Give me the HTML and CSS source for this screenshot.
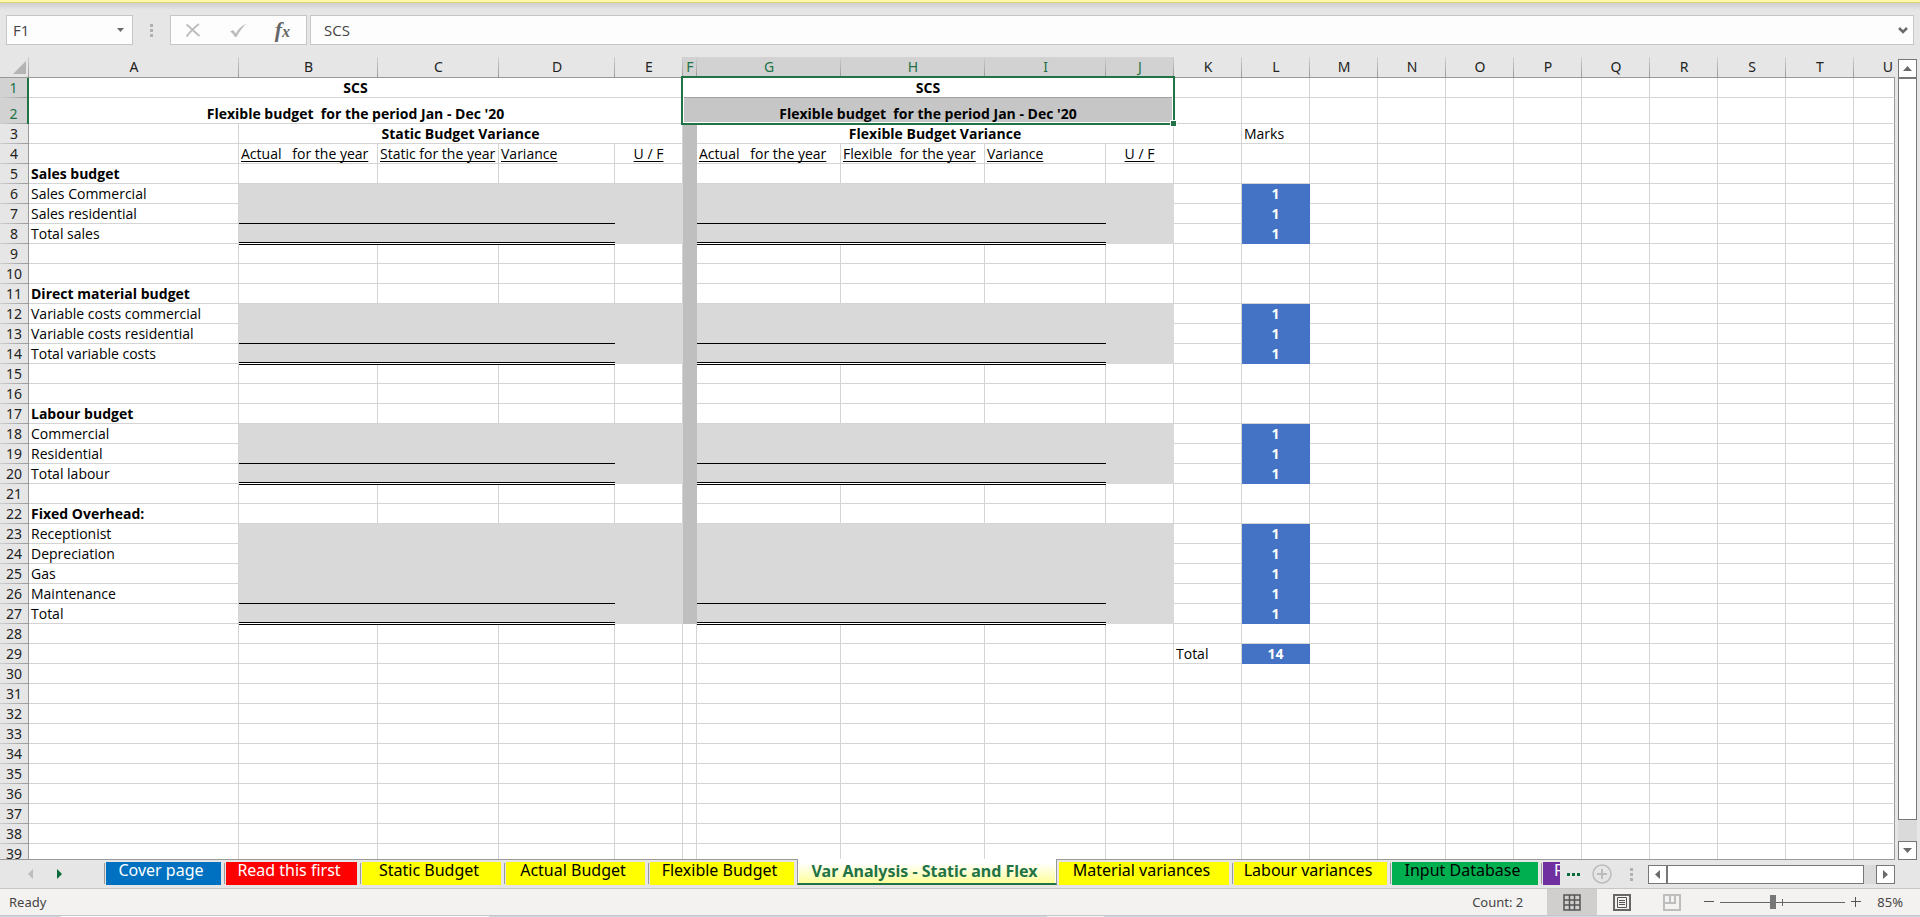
FILE: index.html
```html
<!DOCTYPE html>
<html lang="en">
<head>
<meta charset="utf-8">
<title>Var Analysis - Static and Flex</title>
<link rel="stylesheet" href="styles.css">
</head>
<body>
<div class="app">
  <div class="ribbon-edge"></div>

  <div class="formula-bar">
    <div class="box name-box">
      <input class="name-input" type="text" value="F1" aria-label="Name box">
      <button class="bare name-drop" aria-label="Names"><svg width="7" height="4" viewBox="0 0 7 4"><path d="M0 0h7L3.500 4z" fill="#6a6a6a"/></svg></button>
    </div>
    <svg class="grip" width="3" height="13" viewBox="0 0 3 13"><path d="M0 0h3v3H0zM0 5h3v3H0zM0 10h3v3H0z" fill="#b0b0b0"/></svg>
    <div class="box fx-box">
      <button class="bare" aria-label="Cancel"><svg width="16" height="15" viewBox="0 0 16 15"><path d="M1.500 1.500C6 5 10 9.500 14.500 13M14 1C9 4.500 5 9 1.500 13.500" fill="none" stroke="#bdbdbd" stroke-width="2"/></svg></button>
      <button class="bare" aria-label="Enter"><svg width="18" height="15" viewBox="0 0 18 15"><path d="M1 8.500L4 7l3 3.500C9 6 12.500 2.500 17 1 13 5 10 9 7.500 14H6C4.500 11.500 3 9.500 1 8.500z" fill="#bdbdbd"/></svg></button>
      <button class="bare fx" aria-label="Insert function"><i>f</i><i class="fx-x">x</i></button>
    </div>
    <div class="box formula-box">
      <input class="formula-input" type="text" value="SCS" aria-label="Formula">
      <button class="bare expand" aria-label="Expand"><svg width="10" height="7" viewBox="0 0 10 7"><path d="M1 1l4 4 4-4" fill="none" stroke="#6a6a6a" stroke-width="2.500"/></svg></button>
    </div>
  </div>

  <div class="workspace">
    <div class="grid">
      <table class="sheet">
        <colgroup id="cols"></colgroup>
        <thead id="head"></thead>
        <tbody id="body"></tbody>
      </table>
    </div>
    <div class="vscroll">
      <button class="sb-btn" aria-label="Scroll up"><svg width="9" height="5" viewBox="0 0 9 5"><path d="M0 5h9L4.500 0z" fill="#6a6a6a"/></svg></button>
      <div class="vthumb"></div>
      <button class="sb-btn" aria-label="Scroll down"><svg width="9" height="5" viewBox="0 0 9 5"><path d="M0 0h9L4.500 5z" fill="#6a6a6a"/></svg></button>
    </div>
  </div>

  <div class="tab-bar">
    <div class="tab-nav">
      <button class="bare" aria-label="Previous sheets"><svg width="5" height="10" viewBox="0 0 5 10"><path d="M5 0v10L0 5z" fill="#bcbcbc"/></svg></button>
      <button class="bare" aria-label="Next sheets"><svg width="5" height="10" viewBox="0 0 5 10"><path d="M0 0v10l5-5z" fill="#0a6b3a"/></svg></button>
    </div>
    <div class="tabs">
      <button class="tab w-cover blue"><span>Cover page</span></button>
      <button class="tab w-read red"><span>Read this first</span></button>
      <button class="tab w-static yellow"><span>Static Budget</span></button>
      <button class="tab w-actual yellow"><span>Actual Budget</span></button>
      <button class="tab w-flex yellow"><span>Flexible Budget</span></button>
      <button class="tab w-var active"><span>Var Analysis - Static and Flex</span></button>
      <button class="tab w-mat yellow after-active"><span>Material variances</span></button>
      <button class="tab w-lab yellow"><span>Labour variances</span></button>
      <button class="tab w-input green"><span>Input Database</span></button>
      <button class="tab w-cut purple"><span>F</span></button>
    </div>
    <button class="bare more" aria-label="More sheets"><svg width="13" height="3" viewBox="0 0 13 3"><path d="M0 0h3v3H0zM5 0h3v3H5zM10 0h3v3h-3z" fill="#0a6b3a"/></svg></button>
    <button class="bare add" aria-label="New sheet"><svg width="20" height="20" viewBox="0 0 20 20"><circle cx="10" cy="10" r="9" fill="none" stroke="#bcbcbc" stroke-width="1.500"/><path d="M10 5v10M5 10h10" stroke="#bcbcbc" stroke-width="2"/></svg></button>
    <svg class="grip tab-grip" width="3" height="13" viewBox="0 0 3 13"><path d="M0 0h3v3H0zM0 5h3v3H0zM0 10h3v3H0z" fill="#b0b0b0"/></svg>
    <div class="hscroll">
      <button class="sb-btn" aria-label="Scroll left"><svg width="5" height="9" viewBox="0 0 5 9"><path d="M5 0v9L0 4.500z" fill="#6a6a6a"/></svg></button>
      <div class="hthumb"></div>
      <button class="sb-btn" aria-label="Scroll right"><svg width="5" height="9" viewBox="0 0 5 9"><path d="M0 0v9l5-4.500z" fill="#6a6a6a"/></svg></button>
    </div>
  </div>

  <div class="status-bar">
    <span class="ready">Ready</span>
    <span class="count">Count: 2</span>
    <button class="view on" aria-label="Normal view"><svg width="18" height="17" viewBox="0 0 18 17"><path d="M1 1h16v15H1zM6.500 1v15M11.500 1v15M1 6h16M1 11h16" fill="none" stroke="#555" stroke-width="1.500"/></svg></button>
    <button class="view" aria-label="Page layout"><svg width="18" height="17" viewBox="0 0 18 17"><path d="M1 1h16v15H1z" fill="none" stroke="#666" stroke-width="2"/><path d="M4.500 3.500h9v10h-9zM6 6.500h6M6 8.500h6M6 10.500h6" fill="none" stroke="#555"/></svg></button>
    <button class="view" aria-label="Page break preview"><svg width="18" height="17" viewBox="0 0 18 17"><path d="M1 1h16v15H1zM7 1v8M12 1v8H1" fill="none" stroke="#bdbdbd" stroke-width="2"/></svg></button>
    <button class="bare zoom-out" aria-label="Zoom out"><svg width="10" height="10" viewBox="0 0 10 10"><path d="M0 4.500h10" stroke="#555"/></svg></button>
    <div class="zoom-track"><input class="zoom" type="range" min="10" max="190" value="85" aria-label="Zoom"></div>
    <button class="bare zoom-in" aria-label="Zoom in"><svg width="10" height="10" viewBox="0 0 10 10"><path d="M0 4.500h10M4.500 0v10" stroke="#555"/></svg></button>
    <span class="percent">85%</span>
  </div>
  <div class="desktop-edge"></div>
</div>
<script src="sheet.js"></script>
</body>
</html>
```
FILE: styles.css
```css
* { box-sizing: border-box; }
body {
  margin: 0;
  background: #e6e6e6;
  font-family: "Noto Sans", "Open Sans", sans-serif;
  overflow: hidden;
}
button, input { font-family: inherit; margin: 0; border-radius: 0; }
.bare {
  display: flex;
  align-items: center;
  justify-content: center;
  border: 0;
  padding: 0;
  background: none;
}
svg { display: block; }
.app { display: flex; flex-direction: column; height: 100vh; }

.ribbon-edge {
  flex: none;
  height: 3px;
  background: #fff7a8;
  border-bottom: 1px solid #d9d27c;
}
.formula-bar {
  flex: none;
  display: flex;
  align-items: center;
  height: 54px;
  padding: 12px 6px;
  background: linear-gradient(#cfcfcf, #e6e6e6 7px);
}
.box {
  display: flex;
  align-items: center;
  height: 30px;
  background: #fdfdfd;
  border: 1px solid #c6c6c6;
}
.name-box { width: 127px; padding-left: 6px; }
.name-input, .formula-input {
  flex: 1;
  min-width: 0;
  border: 0;
  padding: 0;
  background: none;
  color: #444;
  font-family: "Open Sans", sans-serif;
  font-size: 15px;
}
.name-drop { width: 24px; height: 28px; }
.grip { flex: none; margin: 0 17px; }
.fx-box { width: 137px; justify-content: space-between; padding: 0 16px 0 14px; }
.fx { color: #666; font-family: "Liberation Serif", serif; font-size: 22px; font-weight: bold; }
.fx-x { font-size: 16px; padding-top: 4px; }
.formula-box { flex: 1; margin-left: 3px; padding-left: 13px; }
.expand { width: 20px; height: 28px; }

.workspace { flex: 1; min-height: 0; display: flex; }
.grid { flex: 1; min-width: 0; overflow: hidden; border-bottom: 1px solid #999; }
.vscroll {
  width: 19px;
  margin: 2px 3px 0;
  display: flex;
  flex-direction: column;
  background: #dadada;
}
.sb-btn {
  flex: none;
  width: 19px;
  height: 19px;
  padding: 0;
  display: flex;
  align-items: center;
  justify-content: center;
  background: #fff;
  border: 1px solid #777;
}
.vthumb { flex: 1; margin-bottom: 21px; background: #fff; border: 1px solid #777; }

.sheet {
  width: 100%;
  table-layout: fixed;
  border-collapse: separate;
  border-spacing: 0;
  font-size: 14px;
  line-height: 18px;
}
.sheet th, .sheet td { padding: 0; white-space: pre; }
.sheet thead th {
  height: 21px;
  font-weight: normal;
  color: #222;
  background: linear-gradient(#d0d0d0, #999) right / 1px 100% no-repeat;
  border-bottom: 1px solid #999;
}
.sheet thead th:last-child { background: none; text-align: right; padding-right: 2px; }
.sheet thead th.sel { background-color: #d2d2d2; color: #217346; }
.corner svg { margin: 0 3px 0 auto; }
.sheet tbody th {
  font-weight: normal;
  color: #222;
  padding-bottom: 1px;
  vertical-align: bottom;
  background: linear-gradient(90deg, #d0d0d0, #999) bottom / 100% 1px no-repeat #e6e6e6;
  border-right: 1px solid #999;
}
.sheet tbody th.sel { background-color: #d2d2d2; color: #217346; border-right: 2px solid #217346; }
.sheet td {
  height: 20px;
  vertical-align: bottom;
  padding: 0 2px;
  color: #000;
  font-family: "Open Sans", sans-serif;
  background: #fff;
  border-right: 1px solid #d4d4d4;
  border-bottom: 1px solid #d4d4d4;
}
.sheet .tall td { height: 26px; }
.sheet tr td:last-child { border-right-color: #999; }
.sheet .bold { font-weight: bold; }
.sheet .center { text-align: center; }
.sheet .under { text-decoration: underline; text-decoration-skip-ink: none; text-underline-offset: 2px; }
.sheet .fill { background: #d9d9d9; border-color: #d9d9d9; }
.sheet .divider { background: #bfbfbf; border-color: #bfbfbf; }
.sheet .line { border-bottom-color: #000; border-right: 0; }
.sheet .double {
  position: relative;
  z-index: 1;
  border-right: 0;
  border-bottom-color: #fff;
  box-shadow: inset 0 -1px #000, 0 1px #000;
}
.sheet .mark { background: #4472c4; border-color: #4472c4; color: #fff; font-weight: bold; text-align: center; }
.sheet .range-top { border-bottom-color: #a0a0a0; }
.sheet .range-end { position: relative; background: #c6c6c6; }
.selection {
  position: absolute;
  top: -22px;
  right: -2px;
  bottom: -2px;
  left: -2px;
  border: 2px solid #217346;
  box-shadow: inset 0 0 0 1px #fff;
}
.handle {
  position: absolute;
  right: -4px;
  bottom: -4px;
  width: 7px;
  height: 7px;
  background: #217346;
  border: 1px solid #fff;
}

.tab-bar {
  flex: none;
  display: flex;
  align-items: center;
  height: 29px;
  border-bottom: 1px solid #c6c6c6;
}
.tab-nav { display: flex; gap: 24px; width: 104px; padding-left: 28px; }
.tabs { display: flex; align-self: stretch; align-items: flex-start; flex: none; }
.tab {
  flex: none;
  height: 25px;
  padding: 2px 3px 0 2px;
  border: 0;
  background: linear-gradient(#999, #999) 0 3px / 1px 21px no-repeat;
  font-size: 16px;
  line-height: 16px;
  color: #000;
}
.tab span { display: block; height: 23px; padding-right: 5px; white-space: pre; }
.w-cover { width: 120px; }
.w-read { width: 136px; }
.w-static { width: 144px; }
.w-actual { width: 144px; }
.w-flex { width: 149px; }
.w-var { width: 260px; }
.w-mat { width: 175px; }
.w-lab { width: 158px; }
.w-input { width: 151px; }
.w-cut { width: 19px; }
.blue span { background: #0070c0; color: #fff; }
.red span { background: #f00; color: #fff; }
.yellow span { background: #ff0; }
.green span { background: #00b050; }
.purple span { background: #7030a0; color: #fff; padding: 0 0 0 11px; overflow: hidden; }
.tab.w-cut { padding-right: 0; }
.tab.active {
  height: 26px;
  margin-top: -1px;
  padding: 3px 1px 0;
  background: #fff;
  border-bottom: 2px solid #217346;
  border-right: 1px solid #999;
  border-left: 1px solid #999;
  font-weight: bold;
  color: #217346;
}
.active span { height: 20px; background: linear-gradient(#fff, #ffff99); }
.tab.after-active { background: none; }
.more { margin-left: 7px; }
.add { margin-left: 12px; }
.tab-grip { margin: 0 15px 0 18px; }
.hscroll { flex: 1; display: flex; margin-right: 25px; background: #dadada; }
.hthumb { flex: 1; margin-right: 12px; background: #fff; border: 1px solid #777; }

.status-bar {
  flex: none;
  display: flex;
  align-items: center;
  height: 26px;
  padding-left: 9px;
  background: #f3f2f1;
  color: #444;
  font-size: 13px;
}
.count { margin: 0 24px 0 auto; }
.view {
  width: 50px;
  height: 26px;
  padding: 0;
  border: 0;
  background: none;
  display: flex;
  align-items: center;
  justify-content: center;
}
.view.on { background: #d0cfce; }
.zoom-out { margin-left: 7px; }
.zoom-track {
  display: flex;
  width: 125px;
  height: 14px;
  margin: 0 6px;
  background:
    linear-gradient(#666, #666) 50% 50% / 1px 7px no-repeat,
    linear-gradient(#666, #666) 50% 50% / 100% 1px no-repeat;
}
.zoom { appearance: none; width: 100%; height: 14px; background: none; }
.zoom::-webkit-slider-thumb { appearance: none; width: 6px; height: 14px; background: #777; }
.percent { margin: 0 17px 0 16px; }
.desktop-edge {
  flex: none;
  height: 2px;
  border-top: 1px solid #c6c6c6;
  background: linear-gradient(90deg, #cdd8e4 61px, #fff 61px 489px, #cdd8e4 489px 1047px, #f0f4f8 1047px 1104px, #cdd8e4 1104px);
}
```
FILE: sheet.js
```js
const columns = 'ABCDEFGHIJKLMNOPQRSTU'.split('');
const widths = [29, 210, 139, 121, 116, 68, 14, 144, 144, 121, 68];
const cornerIcon = '<svg width="13" height="13" viewBox="0 0 13 13"><path d="M13 0v13H0z" fill="#b4b4b4"/></svg>';

document.getElementById('cols').innerHTML = ['', ...columns]
  .map((c, i) => c === 'U' ? '<col>' : `<col style="width:${widths[i] || 68}px">`).join('');
document.getElementById('head').innerHTML = '<tr><th class="corner">' + cornerIcon + '</th>' +
  columns.map(c => `<th class="${c >= 'F' && c <= 'J' ? 'sel' : ''}">${c}</th>`).join('') + '</tr>';

// address: [text, classes, colspan]
const cells = {
  A1: ['SCS', 'bold center', 5],
  F1: ['SCS', 'bold center range-top', 5],
  A2: ["Flexible budget  for the period Jan - Dec '20", 'bold center', 5],
  F2: ["Flexible budget  for the period Jan - Dec '20<span class=\"selection\"></span><span class=\"handle\"></span>", 'bold center range-end', 5],
  B3: ['Static Budget Variance', 'bold center', 4],
  G3: ['Flexible Budget Variance', 'bold center', 4],
  L3: ['Marks', ''],
  B4: ['Actual   for the year', 'under'],
  C4: ['Static for the year', 'under'],
  D4: ['Variance', 'under'],
  E4: ['U / F', 'under center'],
  G4: ['Actual   for the year', 'under'],
  H4: ['Flexible  for the year', 'under'],
  I4: ['Variance', 'under'],
  J4: ['U / F', 'under center'],
  K29: ['Total', ''],
  L29: ['14', 'mark'],
};
const labels = {
  5: 'Sales budget', 6: 'Sales Commercial', 7: 'Sales residential', 8: 'Total sales',
  11: 'Direct material budget', 12: 'Variable costs commercial', 13: 'Variable costs residential', 14: 'Total variable costs',
  17: 'Labour budget', 18: 'Commercial', 19: 'Residential', 20: 'Total labour',
  22: 'Fixed Overhead:', 23: 'Receptionist', 24: 'Depreciation', 25: 'Gas', 26: 'Maintenance', 27: 'Total',
};
for (const row in labels) cells['A' + row] = [labels[row], [5, 11, 17, 22].includes(+row) ? 'bold' : ''];

const blocks = [[6, 8], [12, 14], [18, 20], [23, 27]];
const amounts = 'BCDGHI';

function defaultCell(c, r) {
  const block = blocks.find(([a, b]) => r >= a && r <= b);
  if (c === 'F' && r > 2 && r < 28) return ['', 'divider'];
  if (block && c === 'L') return ['1', 'mark'];
  if (block && 'BCDEGHIJ'.includes(c)) {
    let style = 'fill';
    if (amounts.includes(c) && r === block[1] - 1) style += ' line';
    if (amounts.includes(c) && r === block[1]) style += ' double';
    return ['', style];
  }
  return ['', ''];
}

let html = '';
for (let r = 1; r <= 39; r++) {
  html += `<tr class="${r === 2 ? 'tall' : ''}"><th class="${r < 3 ? 'sel' : ''}">${r}</th>`;
  for (let i = 0; i < columns.length;) {
    const [text, style, span = 1] = cells[columns[i] + r] || defaultCell(columns[i], r);
    html += `<td class="${style}" colspan="${span}">${text}</td>`;
    i += span;
  }
  html += '</tr>';
}
document.getElementById('body').innerHTML = html;
```
